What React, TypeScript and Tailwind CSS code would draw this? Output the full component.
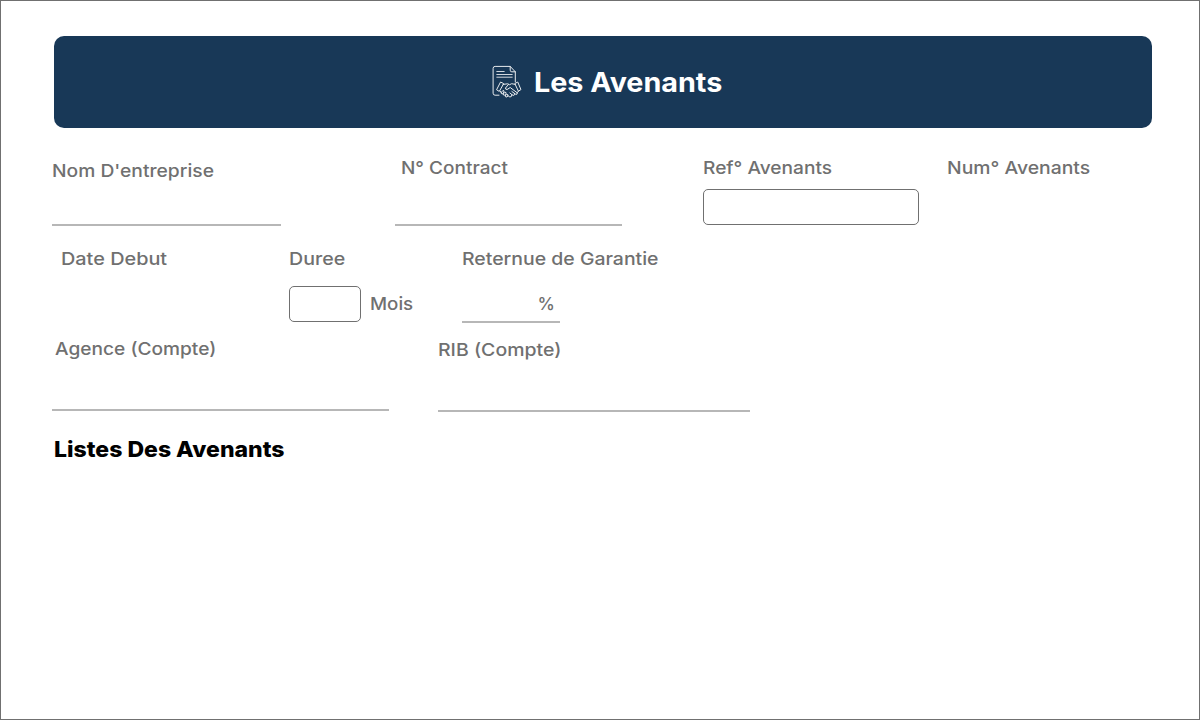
import type { ReactNode } from 'react';

function ContractIcon() {
  return (
    <svg className="h-[34px] w-[31px] opacity-90" viewBox="0 0 31 34" fill="none" stroke="#fff" strokeWidth="1" strokeLinecap="round" strokeLinejoin="round">
      <path d="M7 30.2H3.1Q1.1 30.2 1.1 28.2V3.4Q1.1 1.4 3.1 1.4H18.2L23.3 6.8V17" />
      <path d="M18.2 1.4V5.2Q18.2 6.8 19.8 6.8H23.3" />
      <path d="M4.8 6.5H12.2M4.8 9.5H20.2M4.8 12.2H20.2" strokeWidth=".9" />
      <path d="M8.9 17.2L11.7 18.6L7.3 26.4L4.9 25Z" />
      <path d="M25.4 17.2L22.8 18.6L26.4 26.2L28.6 24.8Z" />
      <path d="M11.2 19.4L15.7 18.8L17.5 19.7L19.7 18.7L23.2 19.4" />
      <path d="M16.5 19.4L13.5 23Q13.3 24.6 15.1 24.5L18.2 22.5L25.2 27.8Q25.7 29.5 23.9 29.4L19.9 26.5M22.5 28.4Q23.1 30.5 21.1 30.5L17.9 28M19.9 29.6Q20 32.2 17.9 32L15.7 30.5" />
      <path d="M7.9 26L9.1 27.2M9.1 27.6L10.9 25.5Q12.5 25.4 12 27L10.5 28.7Q8.9 29.2 9.1 27.6M11.2 29L13 27.2Q14.6 27.2 14 28.8L12.7 30.2Q11 30.6 11.2 29M13.3 30.8L14.7 29.3Q16.4 29.2 15.9 30.8L15 32Q13.2 32.4 13.3 30.8M26.6 26L25.3 27.6" />
    </svg>
  );
}

function Label({ children, className = '' }: { children: ReactNode; className?: string }) {
  return <span className={`block w-fit origin-left whitespace-nowrap text-[17.5px] leading-6 font-medium ${className}`}>{children}</span>;
}

export default function App() {
  return (
    <main className="h-[720px] w-[1200px] overflow-hidden border border-[#707070] bg-white pt-[35px] font-['Inter',sans-serif] text-[#707070]">
      <header className="ml-[53px] flex h-[92px] w-[1098px] items-center rounded-[10px] bg-[#183857] pl-[438px] text-white">
        <ContractIcon />
        <h1 className="mt-[2px] ml-[11px] origin-left scale-x-[1.063] whitespace-nowrap text-[27px] leading-8 font-bold">Les Avenants</h1>
      </header>
      <section className="ml-[51px] flex h-[98px] items-start">
        <div className="mr-[114px] h-full w-[229px] border-b-2 border-[#b7b7b7] pt-[31px]"><Label className="scale-x-[1.1]">Nom D'entreprise</Label></div>
        <div className="mr-[81px] h-full w-[227px] border-b-2 border-[#b7b7b7] pt-[28px] pl-[6px]"><Label className="scale-x-[1.085]">N° Contract</Label></div>
        <div className="mr-[28px] w-[216px] pt-[28px]">
          <Label className="scale-x-[1.093]">Ref° Avenants</Label>
          <input aria-label="Ref Avenants" className="mt-[9px] block h-9 w-full rounded-[5px] border border-[#707070] px-2" />
        </div>
        <div className="pt-[28px]"><Label className="scale-x-[1.106]">Num° Avenants</Label></div>
      </section>
      <section className="ml-[51px] flex h-[97px] items-start pt-[21px]">
        <div className="w-[237px] pl-[9px]"><Label className="scale-x-[1.135]">Date Debut</Label></div>
        <div className="w-[173px]">
          <Label className="scale-x-[1.12]">Duree</Label>
          <div className="mt-[15px] flex items-center gap-[9px]">
            <input aria-label="Duree" className="h-9 w-[72px] rounded-[5px] border border-[#707070] px-2" />
            <Label className="scale-x-[1.07]">Mois</Label>
          </div>
        </div>
        <div>
          <Label className="scale-x-[1.11]">Reternue de Garantie</Label>
          <div className="mt-[15px] flex h-[37px] w-[98px] justify-end border-b-2 border-[#b7b7b7] pt-[6px] pr-[5px]"><Label>%</Label></div>
        </div>
      </section>
      <section className="ml-[51px] flex">
        <div className="mr-[49px] h-[88px] w-[337px] border-b-2 border-[#b7b7b7] pt-[14px] pl-[3px]"><Label className="scale-x-[1.093]">Agence (Compte)</Label></div>
        <div className="h-[89px] w-[312px] border-b-2 border-[#b7b7b7] pt-[15px]"><Label className="scale-x-[1.113]">RIB (Compte)</Label></div>
      </section>
      <h2 className="mt-[21px] ml-[53px] w-fit origin-left scale-x-[1.047] text-[22px] leading-8 font-extrabold whitespace-nowrap text-black">Listes Des Avenants</h2>
    </main>
  );
}
